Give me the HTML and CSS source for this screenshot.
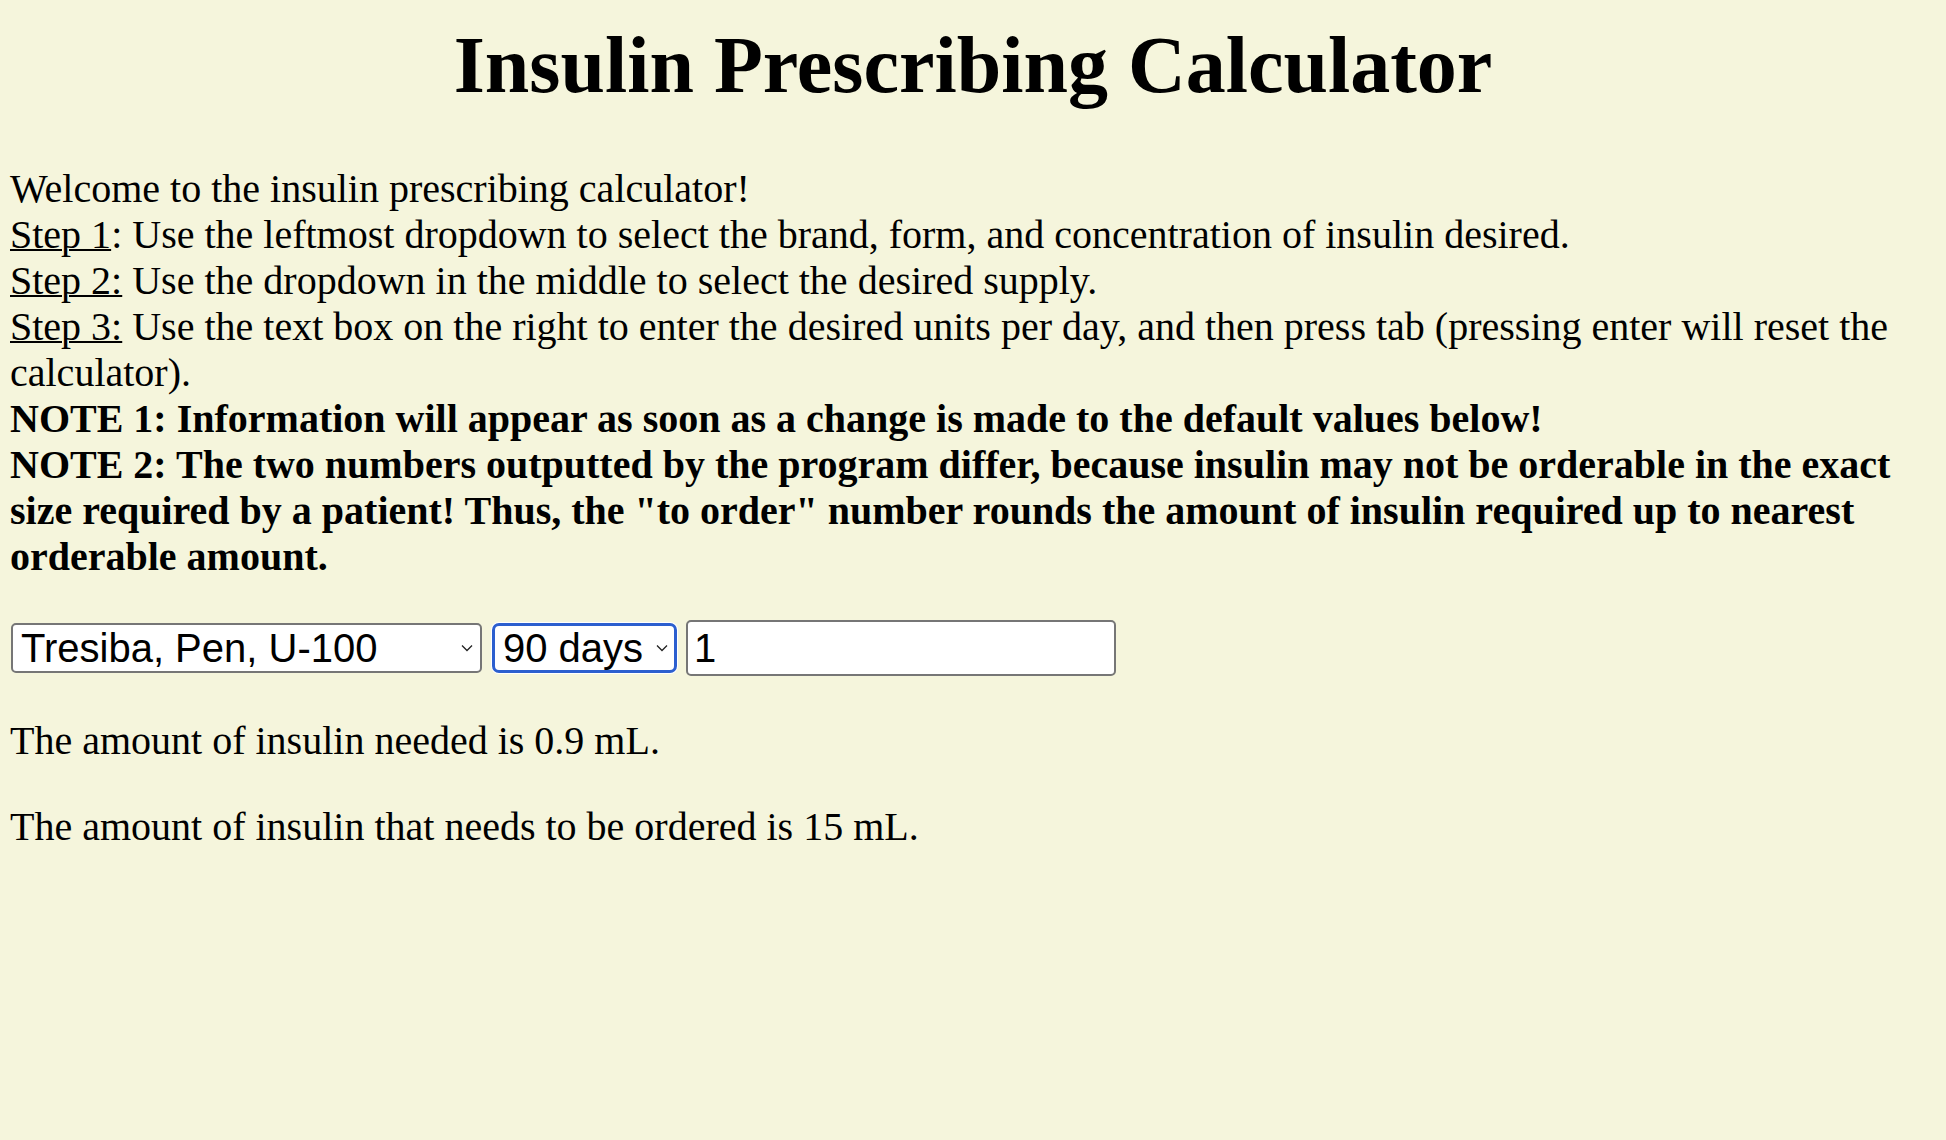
FILE: index.html
```html
<!DOCTYPE html>
<html lang="en">
<head>
<meta charset="utf-8">
<title>Insulin Prescribing Calculator</title>
<link rel="stylesheet" href="styles.css">
</head>
<body>
<h1 class="title">Insulin Prescribing Calculator</h1>
<p class="intro">Welcome to the insulin prescribing calculator!<br>
<u>Step 1</u>: Use the leftmost dropdown to select the brand, form, and concentration of insulin desired.<br>
<u>Step 2:</u> Use the dropdown in the middle to select the desired supply.<br>
<u>Step 3:</u> Use the text box on the right to enter the desired units per day, and then press tab (pressing enter will reset the calculator).<br>
<b>NOTE 1: Information will appear as soon as a change is made to the default values below!</b><br>
<b>NOTE 2: The two numbers outputted by the program differ, because insulin may not be orderable in the exact size required by a patient! Thus, the "to order" number rounds the amount of insulin required up to nearest orderable amount.</b></p>
<div class="controls">
  <div class="select-wrap brand">
    <select class="sel sel-brand">
      <option>Tresiba, Pen, U-100</option>
    </select>
    <svg class="chev" width="12" height="9" viewBox="0 0 12 9"><path d="M1 1.5 L6 6.5 L11 1.5" fill="none" stroke="#222" stroke-width="1.3"/></svg>
  </div>
  <div class="select-wrap supply">
    <select class="sel sel-supply">
      <option>90 days</option>
    </select>
    <svg class="chev" width="12" height="9" viewBox="0 0 12 9"><path d="M1 1.5 L6 6.5 L11 1.5" fill="none" stroke="#222" stroke-width="1.3"/></svg>
  </div>
  <input class="units" type="text" value="1">
</div>
<p class="out">The amount of insulin needed is 0.9 mL.</p>
<p class="out">The amount of insulin that needs to be ordered is 15 mL.</p>
</body>
</html>
```
FILE: styles.css
```css
html {
  background: #f5f5dc;
}
body {
  margin: 0;
  padding: 0 10px;
  background: #f5f5dc;
  color: #000;
  font-family: "Liberation Serif", "Times New Roman", serif;
  font-size: 40px;
  line-height: 46px;
}
.title {
  font-size: 80px;
  font-weight: bold;
  text-align: center;
  margin: 19px 0 55px;
  line-height: 92px;
}
.intro {
  margin: 0;
}
.intro u {
  text-decoration-thickness: 2px;
}
.controls {
  display: flex;
  align-items: center;
  margin: 40px 0 42px;
  padding-left: 1px;
}
.select-wrap {
  position: relative;
  display: flex;
}
.sel {
  appearance: none;
  -webkit-appearance: none;
  font-family: "Liberation Sans", Arial, sans-serif;
  font-size: 40px;
  color: #000;
  background: #fff;
  margin: 0;
  height: 50px;
  line-height: 44px;
  box-sizing: border-box;
}
.sel-brand {
  width: 471px;
  border: 2px solid #767676;
  border-radius: 5px;
  padding: 0 30px 0 8px;
}
.sel-supply {
  width: 185px;
  border: 3px solid #2c5fcf;
  border-radius: 7px;
  padding: 0 28px 0 8px;
  box-shadow: 0 0 0 1px #fff;
}
.brand {
  margin-right: 10px;
}
.supply {
  margin-right: 9px;
}
.chev {
  position: absolute;
  top: 21px;
  right: 9px;
  pointer-events: none;
}
.units {
  width: 430px;
  height: 56px;
  box-sizing: border-box;
  border: 2px solid #767676;
  border-radius: 5px;
  background: #fff;
  font-family: "Liberation Sans", Arial, sans-serif;
  font-size: 40px;
  padding: 0 6px;
  margin: 0;
  color: #000;
}
.out {
  margin: 40px 0;
}
```
